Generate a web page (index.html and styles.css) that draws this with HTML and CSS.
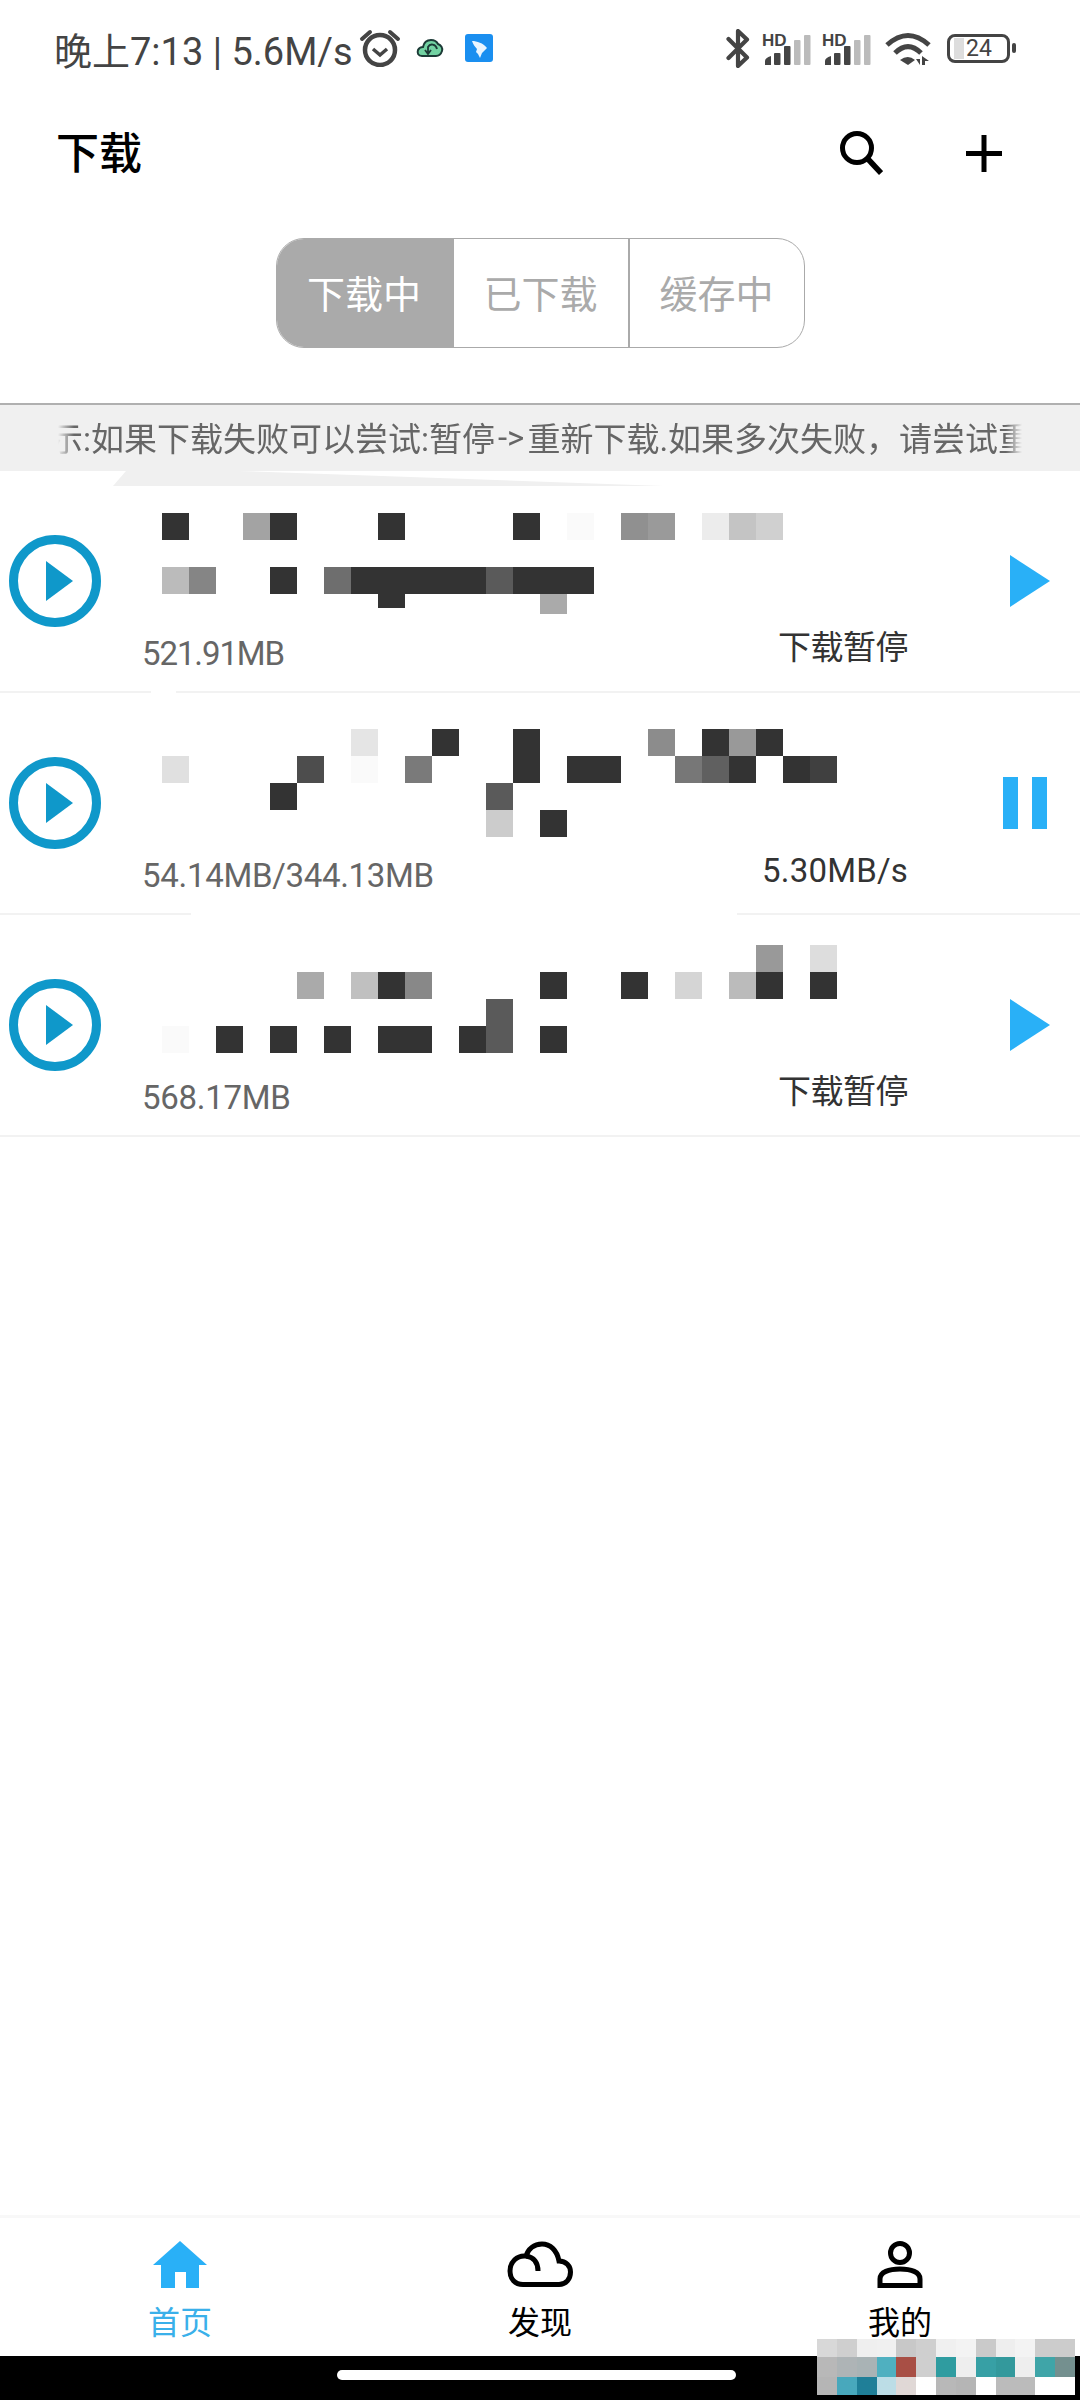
FILE: index.html
```html
<!DOCTYPE html>
<html lang="zh-CN">
<head>
  <meta charset="UTF-8">
  <meta name="viewport" content="width=device-width, initial-scale=1.0">
  <title>下载</title>
  <link rel="stylesheet" href="styles.css">
</head>
<body>
  <!-- Status bar -->
  <div class="status-bar">
    <div class="status-left">
      <span class="status-time">晚上7:13 | 5.6M/s</span>
      <svg class="icon-alarm" viewBox="0 0 42 38" width="42" height="38">
        <circle cx="21" cy="21" r="15" fill="none" stroke="#444" stroke-width="4.5"/>
        <path d="M14 20 L21 26 L28 20" fill="none" stroke="#444" stroke-width="3.5"/>
        <path d="M3 10 L11 3 M39 10 L31 3" fill="none" stroke="#444" stroke-width="4" stroke-linecap="round"/>
      </svg>
      <svg class="icon-cloud-sync" viewBox="0 0 28 20" width="28" height="20">
        <path d="M6 18 C2 18 1 15 2 12 C3 10 5 9 7 9 C8 4 11 2 15 2 C19 2 21 4 22 6 C25 7 27 10 26 13 C25 16 23 18 20 18 Z" fill="#72d2a2" stroke="#1c3a36" stroke-width="2"/>
        <path d="M21 11 C20 6 14 5 12 9 L12 15 M9 12 L12 16 L15 12" fill="none" stroke="#1c3a36" stroke-width="1.8"/>
      </svg>
      <svg class="icon-app" viewBox="0 0 28 28" width="28" height="28">
        <rect width="28" height="28" rx="3" fill="#1a8ff0"/>
        <path d="M7 7 C12 7 18 9 22 14 L17 19 L15 24 L13 20 L11 18 L12 15 C10 13 8 10 7 7 Z" fill="#e9f5ff"/>
      </svg>
    </div>
    <div class="status-right">
      <svg class="icon-bt" viewBox="0 0 24 39" width="24" height="39">
        <path d="M2.5 10 L21 28.5 L12 37 L12 2 L21 10.5 L2.5 29" fill="none" stroke="#444" stroke-width="4.2" stroke-linejoin="round" stroke-linecap="round"/>
      </svg>
      <svg class="icon-signal" viewBox="0 -4 50 38" width="50" height="38">
        <text class="hd-label" x="0" y="13">HD</text>
        <path d="M3 32 V28 Q3 25 9 23 V32 Z" fill="#444"/>
        <rect x="12" y="20" width="6.5" height="12" rx="1" fill="#444"/>
        <rect x="22" y="13" width="6.5" height="19" rx="1" fill="#444"/>
        <rect x="32" y="7" width="6.5" height="25" rx="1" fill="#bbb"/>
        <rect x="42" y="2" width="6.5" height="30" rx="1" fill="#bbb"/>
      </svg>
      <svg class="icon-signal" viewBox="0 -4 50 38" width="50" height="38">
        <text class="hd-label" x="0" y="13">HD</text>
        <path d="M3 32 V28 Q3 25 9 23 V32 Z" fill="#444"/>
        <rect x="12" y="20" width="6.5" height="12" rx="1" fill="#444"/>
        <rect x="22" y="13" width="6.5" height="19" rx="1" fill="#444"/>
        <rect x="32" y="7" width="6.5" height="25" rx="1" fill="#bbb"/>
        <rect x="42" y="2" width="6.5" height="30" rx="1" fill="#bbb"/>
      </svg>
      <svg class="icon-wifi" viewBox="0 0 46 35" width="46" height="35">
        <path d="M2 14 Q23 -5 44 14" fill="none" stroke="#444" stroke-width="5"/>
        <path d="M10 22 Q23 9 36 22" fill="none" stroke="#444" stroke-width="5"/>
        <path d="M15 29 Q23 23 30 29 L23 34 Z" fill="#444"/>
        <path d="M31 28 H35 V34 Z M37 34 V25 L44 30 H40 V34 Z" fill="#444"/>
      </svg>
      <div class="battery">
        <div class="battery-body">
          <span class="battery-fill"></span>
          <span class="battery-level">24</span>
        </div>
        <span class="battery-cap"></span>
      </div>
    </div>
  </div>

  <!-- Header -->
  <header class="app-header">
    <h1 class="app-title">下载</h1>
    <div class="header-actions">
      <svg viewBox="0 0 44 44" width="44" height="44">
        <circle cx="18" cy="17" r="14.500" fill="none" stroke="#000" stroke-width="5"/>
        <path d="M28 27 L42 42" fill="none" stroke="#000" stroke-width="5.500"/>
      </svg>
      <svg viewBox="0 0 36 37" width="36" height="37">
        <path d="M18 0 V37 M0 18.500 H36" fill="none" stroke="#000" stroke-width="5"/>
      </svg>
    </div>
  </header>

  <!-- Tabs -->
  <div class="tabs">
    <div class="tab tab-active">下载中</div>
    <div class="tab">已下载</div>
    <div class="tab">缓存中</div>
  </div>

  <!-- Notice -->
  <div class="notice">
    <div class="notice-text">示:如果下载失败可以尝试:暂停<span class="notice-arrow">-&gt;</span>重新下载.如果多次失败，请尝试重</div>
    <div class="notice-tail"></div>
  </div>

  <!-- Download list -->
  <main class="download-list">
    <div class="download-item gap-first">
      <svg class="ring-play" viewBox="0 0 92 92" width="92" height="92">
        <circle cx="46" cy="46" r="41.500" fill="none" stroke="#0f98ca" stroke-width="9"/>
        <path d="M37 26 L64 46 L37 66 Z" fill="#0f98ca"/>
      </svg>
      <div class="item-info">
        <div class="mosaic-box top-42"><div class="mosaic" data-index="0"></div></div>
        <div class="item-meta">
          <span class="item-size size-tight">521.91MB</span>
          <span class="item-status">下载暂停</span>
        </div>
      </div>
      <svg class="item-action" viewBox="0 0 47 52" width="47" height="52"><path d="M7 0 L47 26 L7 52 Z" fill="#29b0f7"/></svg>
    </div>

    <div class="download-item gap-second">
      <svg class="ring-play" viewBox="0 0 92 92" width="92" height="92">
        <circle cx="46" cy="46" r="41.500" fill="none" stroke="#0f98ca" stroke-width="9"/>
        <path d="M37 26 L64 46 L37 66 Z" fill="#0f98ca"/>
      </svg>
      <div class="item-info">
        <div class="mosaic-box top-36"><div class="mosaic" data-index="1"></div></div>
        <div class="item-meta">
          <span class="item-size">54.14MB/344.13MB</span>
          <span class="item-status status-speed">5.30MB/s</span>
        </div>
      </div>
      <svg class="item-action" viewBox="0 0 47 52" width="47" height="52"><path d="M0 0 H15 V52 H0 Z M29 0 H44 V52 H29 Z" fill="#29b0f7"/></svg>
    </div>

    <div class="download-item">
      <svg class="ring-play" viewBox="0 0 92 92" width="92" height="92">
        <circle cx="46" cy="46" r="41.500" fill="none" stroke="#0f98ca" stroke-width="9"/>
        <path d="M37 26 L64 46 L37 66 Z" fill="#0f98ca"/>
      </svg>
      <div class="item-info">
        <div class="mosaic-box top-30"><div class="mosaic" data-index="2"></div></div>
        <div class="item-meta">
          <span class="item-size">568.17MB</span>
          <span class="item-status">下载暂停</span>
        </div>
      </div>
      <svg class="item-action" viewBox="0 0 47 52" width="47" height="52"><path d="M7 0 L47 26 L7 52 Z" fill="#29b0f7"/></svg>
    </div>
  </main>

  <!-- Bottom navigation -->
  <nav class="bottom-nav">
    <div class="nav-item nav-active">
      <svg viewBox="0 0 54 47" width="54" height="47">
        <path d="M27 0 L54 24 H46 V47 H33 V31 H22 V47 H8 V24 H0 Z" fill="#29b0f7"/>
      </svg>
      <span>首页</span>
    </div>
    <div class="nav-item">
      <svg viewBox="0 0 66 47" width="66" height="47">
        <path d="M16 43.500 H52 C59 43.500 63.500 38 63.500 31 C63.500 25 59 20 52 20 C50 9 43 3 35 3 C27 3 21 8 19 15 C10 14 3 21 3 30 C3 38 8 43.500 16 43.500 Z" fill="none" stroke="#000" stroke-width="5"/>
        <path d="M19 15 C27 16 31 22 31 30" fill="none" stroke="#000" stroke-width="5"/>
      </svg>
      <span>发现</span>
    </div>
    <div class="nav-item">
      <svg viewBox="0 0 46 47" width="46" height="47">
        <circle cx="23" cy="12" r="9.500" fill="none" stroke="#000" stroke-width="5"/>
        <path d="M3 44.500 V38 C3 31 12 28 23 28 C34 28 43 31 43 38 V44.500 Z" fill="none" stroke="#000" stroke-width="5"/>
      </svg>
      <span>我的</span>
    </div>
  </nav>

  <!-- Gesture bar -->
  <div class="home-bar">
    <span class="home-pill"></span>
    <div class="corner-mosaic"></div>
  </div>

  <script src="script.js"></script>
</body>
</html>
```

FILE: styles.css
```css
/* General Styles */
* {
  box-sizing: border-box;
}

body {
  font-family: Roboto, 'Noto Sans CJK SC', sans-serif;
  margin: 0;
  width: 1080px;
  height: 2400px;
  display: flex;
  flex-direction: column;
  overflow: hidden;
  background-color: #fff;
  color: #333;
}

svg {
  display: block;
  flex-shrink: 0;
}

/* Status Bar */
.status-bar {
  height: 96px;
  display: flex;
  align-items: center;
  justify-content: space-between;
  padding: 0 64px 0 54px;
  color: #444;
}

.status-left,
.status-right {
  display: flex;
  align-items: center;
}

.status-time {
  font-size: 38px;
  white-space: nowrap;
}

.icon-alarm {
  margin-left: 6px;
}

.icon-cloud-sync {
  margin-left: 15px;
}

.icon-app {
  margin-left: 21px;
}

.icon-signal {
  margin-left: 12px;
}

.icon-signal + .icon-signal {
  margin-left: 10px;
}

.hd-label {
  font-family: 'Liberation Sans', sans-serif;
  font-size: 17px;
  font-weight: bold;
  fill: #444;
}

.icon-wifi {
  margin-left: 13px;
}

.battery {
  display: flex;
  align-items: center;
  gap: 2px;
  margin-left: 16px;
}

.battery-body {
  width: 63px;
  height: 29px;
  border: 3px solid #444;
  border-radius: 8px;
  display: flex;
  align-items: center;
  padding-left: 4px;
}

.battery-fill {
  width: 10px;
  height: 21px;
  background-color: #ddd;
}

.battery-level {
  margin-left: 2px;
  font-size: 23px;
  line-height: 1;
}

.battery-cap {
  width: 4px;
  height: 10px;
  background-color: #444;
  border-radius: 2px;
}

/* Header */
.app-header {
  height: 114px;
  display: flex;
  align-items: center;
  justify-content: space-between;
  padding: 0 78px 0 56px;
}

.app-title {
  margin: 0 0 6px;
  font-size: 43px;
  font-weight: 500;
  color: #000;
}

.header-actions {
  display: flex;
  align-items: center;
  gap: 83px;
}

/* Tabs */
.tabs {
  width: 529px;
  height: 110px;
  margin: 28px auto 55px;
  display: flex;
  border: 1px solid #aaa;
  border-radius: 28px;
  overflow: hidden;
}

.tab {
  width: 176px;
  display: flex;
  align-items: center;
  justify-content: center;
  padding-bottom: 4px;
  font-size: 38px;
  color: #aaa;
  border-left: 2px solid #aaa;
}

.tab:first-child {
  width: 175px;
  border-left: none;
}

.tab:last-child {
  flex: 1;
}

.tab-active {
  background-color: #aaa;
  color: #fff;
}

/* Notice */
.notice {
  height: 68px;
  position: relative;
  background-color: #f0f0f0;
  border-top: 2px solid #b0b0b0;
  padding: 0 40px 0 50px;
}

.notice-text {
  height: 66px;
  display: flex;
  align-items: center;
  padding-bottom: 2px;
  white-space: nowrap;
  font-size: 33px;
  color: #666;
  -webkit-mask-image: linear-gradient(to right, transparent 8px, #000 24px, #000 956px, transparent 972px);
  mask-image: linear-gradient(to right, transparent 8px, #000 24px, #000 956px, transparent 972px);
}

.notice-arrow {
  margin: 0 3px;
}

.notice-tail {
  position: absolute;
  left: 113px;
  top: 66px;
  width: 551px;
  height: 15px;
  background-color: #f0f0f0;
  clip-path: polygon(13px 0, 126px 0, 100% 100%, 0 100%);
}

/* Download List */
.download-list {
  flex: 1;
}

.download-item {
  height: 222px;
  position: relative;
  display: flex;
  align-items: center;
  padding-left: 9px;
  border-bottom: 2px solid #f2f2f2;
}

.gap-first::after,
.gap-second::after {
  content: "";
  position: absolute;
  bottom: -2px;
  height: 2px;
  background-color: #fff;
}

.gap-first::after {
  left: 151px;
  width: 25px;
}

.gap-second::after {
  left: 191px;
  width: 546px;
}

.ring-play {
  margin-right: 44px;
}

.item-info {
  width: 763px;
  height: 100%;
}

.mosaic-box {
  height: 160px;
  padding-left: 17px;
}

.top-42 {
  padding-top: 42px;
}

.top-36 {
  padding-top: 36px;
}

.top-30 {
  padding-top: 30px;
}

.mosaic {
  display: grid;
  grid-template-columns: repeat(25, 27px);
  grid-auto-rows: 27px;
}

.item-meta {
  height: 44px;
  display: flex;
  align-items: center;
  justify-content: space-between;
  white-space: nowrap;
}

.item-size {
  margin-left: -3px;
  font-size: 33px;
  letter-spacing: -0.300px;
  color: #666;
}

.size-tight {
  letter-spacing: -1.100px;
}

.item-status {
  font-size: 33px;
  letter-spacing: -0.500px;
  color: #333;
  margin-bottom: 16px;
}

.status-speed {
  letter-spacing: 0.200px;
  margin-bottom: 10px;
}

.item-action {
  margin-left: 95px;
}

/* Bottom Navigation */
.bottom-nav {
  height: 141px;
  display: flex;
  border-top: 3px solid #f8f8f8;
  padding-top: 23px;
}

.nav-item {
  flex: 1;
  display: flex;
  flex-direction: column;
  align-items: center;
  gap: 16px;
  font-size: 32px;
  line-height: 38px;
  color: #000;
}

.nav-active {
  color: #3ab0ea;
}

/* Gesture Bar */
.home-bar {
  height: 44px;
  position: relative;
  background-color: #000;
  display: flex;
  justify-content: center;
  align-items: center;
}

.home-pill {
  width: 399px;
  height: 10px;
  margin: 0 7px 6px 0;
  border-radius: 5px;
  background-color: #fff;
}

.corner-mosaic {
  position: absolute;
  left: 817px;
  top: -17px;
  width: 258px;
  display: grid;
  grid-template-columns: repeat(13, 1fr);
  grid-template-rows: 18px 20px 18px;
}
```

FILE: script.js
```js
// Blurred-out file names: [column, row, colour, optional height]
const titleCells = [
  [
    [0, 0, '#333'], [3, 0, '#a3a3a3'], [4, 0, '#333'], [8, 0, '#333'], [13, 0, '#333'],
    [15, 0, '#fafafa'], [17, 0, '#909090'], [18, 0, '#9a9a9a'], [20, 0, '#ececec'],
    [21, 0, '#c4c4c4'], [22, 0, '#d0d0d0'],
    [0, 2, '#bbb'], [1, 2, '#858585'], [4, 2, '#333'], [6, 2, '#6e6e6e'], [7, 2, '#333'],
    [8, 2, '#333'], [9, 2, '#333'], [10, 2, '#333'], [11, 2, '#333'], [12, 2, '#5a5a5a'],
    [13, 2, '#333'], [14, 2, '#333'], [15, 2, '#333'],
    [8, 3, '#333', 14], [14, 3, '#aaa', 20]
  ],
  [
    [7, 0, '#e5e5e5'], [10, 0, '#333'], [13, 0, '#333'], [18, 0, '#8c8c8c'], [20, 0, '#333'],
    [21, 0, '#999'], [22, 0, '#333'],
    [0, 1, '#e0e0e0'], [5, 1, '#4d4d4d'], [7, 1, '#fafafa'], [9, 1, '#7a7a7a'], [13, 1, '#333'],
    [15, 1, '#333'], [16, 1, '#333'], [19, 1, '#777'], [20, 1, '#606060'], [21, 1, '#333'],
    [23, 1, '#333'], [24, 1, '#404040'],
    [4, 2, '#333'], [12, 2, '#5a5a5a'],
    [12, 3, '#ccc'], [14, 3, '#333']
  ],
  [
    [22, 0, '#999'], [24, 0, '#ddd'],
    [5, 1, '#aaa'], [7, 1, '#c0c0c0'], [8, 1, '#333'], [9, 1, '#888'], [14, 1, '#333'],
    [17, 1, '#333'], [19, 1, '#d5d5d5'], [21, 1, '#bbb'], [22, 1, '#333'], [24, 1, '#333'],
    [12, 2, '#5a5a5a'],
    [0, 3, '#fafafa'], [2, 3, '#333'], [4, 3, '#333'], [6, 3, '#333'], [8, 3, '#333'],
    [9, 3, '#333'], [11, 3, '#333'], [12, 3, '#5a5a5a'], [14, 3, '#333']
  ]
];

const cornerColours = [
  '#d8d8d8', '#cfcfcf', '#efefef', '#f0f0f0', '#c8c8c8', '#cfcfcf', '#f0f0f0', '#f3f3f3', '#cacaca', '#eee', '#f3f3f3', '#ccc', '#ccc',
  '#b8b8b8', '#aeb4b6', '#a9b3b5', '#4fb0c0', '#a84f45', '#cfcfcf', '#2f9ca0', '#eee', '#37a0a5', '#33999c', '#eee', '#3fa5a8', '#74908f',
  '#b5b5b5', '#48a8bc', '#1f7f98', '#bcdde6', '#e0d8d6', '#fff', '#b8b8b8', '#b5b5b5', '#fff', '#bbb', '#bbb', '#fff', '#fff'
];

document.querySelectorAll('.mosaic').forEach((mosaic) => {
  // Keep four rows even when some of them are empty
  mosaic.style.gridTemplateRows = 'repeat(4, 27px)';
  titleCells[mosaic.dataset.index].forEach(([col, row, colour, height]) => {
    const cell = document.createElement('div');
    cell.style.gridColumn = col + 1;
    cell.style.gridRow = row + 1;
    cell.style.background = colour;
    if (height) cell.style.height = height + 'px';
    mosaic.appendChild(cell);
  });
});

const corner = document.querySelector('.corner-mosaic');
cornerColours.forEach((colour) => {
  const cell = document.createElement('div');
  cell.style.background = colour;
  corner.appendChild(cell);
});
```
